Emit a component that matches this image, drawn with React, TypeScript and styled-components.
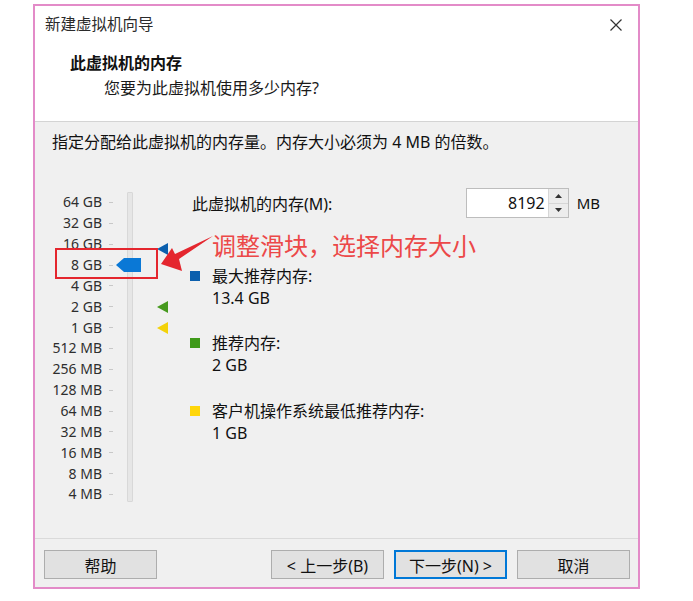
import React from 'react';
import styled, {createGlobalStyle} from 'styled-components';

const GlobalStyle = createGlobalStyle`
  body {
    margin: 0;
    background: #fff;
    font-family: "Noto Sans", "Noto Sans CJK SC", sans-serif;
    color: #111;
  }
`;

const ROW = 20.86;
const SCALE_TOP = 4;

const scaleLabels = [
  '64 GB', '32 GB', '16 GB', '8 GB', '4 GB', '2 GB', '1 GB',
  '512 MB', '256 MB', '128 MB', '64 MB', '32 MB', '16 MB', '8 MB', '4 MB',
];

// row centre for a value in MB (log2 scale, 64 GB on top)
const rowCenter = (mb: number) =>
  SCALE_TOP + ROW / 2 + Math.log2(65536 / mb) * ROW;

const markers = [
  {mb: 13.4 * 1024, color: '#0b5fad'},
  {mb: 2048, color: '#479a1f'},
  {mb: 1024, color: '#f3d20a'},
];

const legend = [
  {label: '最大推荐内存:', value: '13.4 GB', color: '#0b5fad'},
  {label: '推荐内存:', value: '2 GB', color: '#3f9a1a'},
  {label: '客户机操作系统最低推荐内存:', value: '1 GB', color: '#ffd60a'},
];

const Page = styled.div`
  padding: 4px 0 0 33px;
`;

const Dialog = styled.div`
  width: 607px;
  height: 585px;
  box-sizing: border-box;
  border: 2px solid #e38bc8;
  display: flex;
  flex-direction: column;
  background: #f0f0f0;
`;

const Header = styled.header`
  flex-shrink: 0;
  height: 115px;
  background: #fff;
  border-bottom: 1px solid #d4d4d4;
`;

const TitleBar = styled.div`
  display: flex;
  align-items: center;
  justify-content: space-between;
  height: 20px;
  padding: 8px 16px 0 10px;
`;

const WindowTitle = styled.span`
  font-size: 15.5px;
  color: #2b2b2b;
  line-height: 20px;
`;

const CloseButton = styled.span`
  display: flex;
  width: 12px;
  height: 12px;
  margin-top: 2px;
`;

const Heading = styled.div`
  margin-top: 18px;
  padding-left: 35px;
  font-size: 16px;
  font-weight: bold;
  line-height: 22px;
  color: #111;
`;

const SubHeading = styled.div`
  margin-top: 3px;
  padding-left: 69px;
  font-size: 16px;
  line-height: 22px;
  color: #1a1a1a;
`;

const Body = styled.main`
  position: relative;
  flex: 1;
  padding: 9px 0 0 17px;
  font-size: 16px;
`;

const Instruction = styled.div`
  line-height: 22px;
`;

const Content = styled.div`
  display: flex;
  margin-top: 35px;
`;

const Scale = styled.div`
  position: relative;
  display: flex;
  width: 138px;
  padding-top: ${SCALE_TOP}px;
  box-sizing: border-box;
`;

const Labels = styled.div`
  display: grid;
  grid-template-columns: 50px 4px;
  column-gap: 7px;
  grid-auto-rows: ${ROW}px;
  align-items: center;
`;

const ScaleLabel = styled.span`
  font-size: 14px;
  line-height: 1;
  text-align: right;
  color: #2e2e2e;
`;

const Tick = styled.span`
  height: 1px;
  background: #c8c8c8;
`;

const Track = styled.div`
  width: 6px;
  height: 310px;
  margin-left: 14px;
  box-sizing: border-box;
  background: #e6e6e6;
  border: 1px solid #d8d8d8;
  border-radius: 1px;
`;

const Thumb = styled.svg<{$top: number}>`
  position: absolute;
  left: 64px;
  top: ${({$top}) => $top - 7}px;
`;

const Marker = styled.svg<{$top: number}>`
  position: absolute;
  left: 105px;
  top: ${({$top}) => $top - 6}px;
`;

const Settings = styled.div`
  display: flex;
  flex-direction: column;
  width: 410px;
`;

const MemoryRow = styled.div`
  display: flex;
  align-items: center;
  height: 30px;
`;

const MemoryLabel = styled.span`
  flex: 1;
  padding-left: 2px;
`;

const SpinBox = styled.div`
  display: flex;
  width: 103px;
  height: 30px;
  box-sizing: border-box;
  border: 1px solid #bdbdbd;
  background: #fff;
`;

const SpinValue = styled.span`
  flex: 1;
  padding-right: 3px;
  text-align: right;
  line-height: 28px;
  color: #111;
`;

const SpinButtons = styled.div`
  display: flex;
  flex-direction: column;
  width: 19px;
  background: #ececec;
  border-left: 1px solid #d6d6d6;
`;

const SpinArrow = styled.span<{$down?: boolean}>`
  display: flex;
  flex: 1;
  align-items: center;
  justify-content: center;
  border-top: ${({$down}) => ($down ? '1px solid #d6d6d6' : 'none')};
`;

const Unit = styled.span`
  margin-left: 8px;
  font-size: 15px;
`;

const Legend = styled.div`
  display: flex;
  flex-direction: column;
  gap: 23.5px;
  margin-top: 46.5px;
`;

const LegendItem = styled.div`
  display: grid;
  grid-template-columns: 22px auto;
  line-height: 22px;
`;

const Swatch = styled.span<{$color: string}>`
  width: 10px;
  height: 10px;
  margin-top: 6px;
  background: ${({$color}) => $color};
`;

const LegendValue = styled.span`
  grid-column: 2;
`;

const Footer = styled.footer`
  flex-shrink: 0;
  display: flex;
  gap: 10px;
  height: 49px;
  box-sizing: border-box;
  padding: 11px 8px 0 9px;
  border-top: 1px solid #dadada;
`;

const Button = styled.button<{$primary?: boolean; $pushRight?: boolean}>`
  width: 113px;
  height: 29px;
  margin-left: ${({$pushRight}) => ($pushRight ? 'auto' : '0')};
  padding: 0;
  background: #e1e1e1;
  border: 1px solid ${({$primary}) => ($primary ? '#0078d7' : '#adadad')};
  box-shadow: ${({$primary}) => ($primary ? 'inset 0 0 0 1px #0078d7' : 'none')};
  font-family: inherit;
  font-size: 16px;
  color: #111;
`;

const RedBox = styled.div`
  position: absolute;
  left: 20px;
  top: 126px;
  width: 103px;
  height: 31px;
  box-sizing: border-box;
  border: 2px solid #e4262e;
`;

const Arrow = styled.svg`
  position: absolute;
  left: 123px;
  top: 110px;
`;

const Callout = styled.div`
  position: absolute;
  left: 177px;
  top: 109px;
  font-size: 24px;
  line-height: 30px;
  color: #ec4848;
  white-space: nowrap;
`;

export default function App() {
  return (
    <Page>
      <GlobalStyle />
      <Dialog>
        <Header>
          <TitleBar>
            <WindowTitle>新建虚拟机向导</WindowTitle>
            <CloseButton>
              <svg width="12" height="12" viewBox="0 0 12 12">
                <path d="M0.5 0.5 L11.5 11.5 M11.5 0.5 L0.5 11.5" stroke="#333" strokeWidth="1.2" />
              </svg>
            </CloseButton>
          </TitleBar>
          <Heading>此虚拟机的内存</Heading>
          <SubHeading>您要为此虚拟机使用多少内存?</SubHeading>
        </Header>

        <Body>
          <Instruction>指定分配给此虚拟机的内存量。内存大小必须为 4 MB 的倍数。</Instruction>
          <Content>
            <Scale>
              <Labels>
                {scaleLabels.map((l) => (
                  <React.Fragment key={l}>
                    <ScaleLabel>{l}</ScaleLabel>
                    <Tick />
                  </React.Fragment>
                ))}
              </Labels>
              <Track />
              {markers.map((m) => (
                <Marker key={m.mb} $top={rowCenter(m.mb)} width="11" height="12" viewBox="0 0 11 12">
                  <path d="M0 6 L11 0 L11 12 Z" fill={m.color} />
                </Marker>
              ))}
              <Thumb $top={rowCenter(8192)} width="25" height="14" viewBox="0 0 25 14">
                <path d="M0 7 L8 0 H25 V14 H8 Z" fill="#0a78d6" />
              </Thumb>
            </Scale>

            <Settings>
              <MemoryRow>
                <MemoryLabel>此虚拟机的内存(M):</MemoryLabel>
                <SpinBox>
                  <SpinValue>8192</SpinValue>
                  <SpinButtons>
                    <SpinArrow>
                      <svg width="7" height="4" viewBox="0 0 7 4">
                        <path d="M0 4 L3.5 0 L7 4 Z" fill="#333" />
                      </svg>
                    </SpinArrow>
                    <SpinArrow $down>
                      <svg width="7" height="4" viewBox="0 0 7 4">
                        <path d="M0 0 L3.5 4 L7 0 Z" fill="#333" />
                      </svg>
                    </SpinArrow>
                  </SpinButtons>
                </SpinBox>
                <Unit>MB</Unit>
              </MemoryRow>

              <Legend>
                {legend.map((item) => (
                  <LegendItem key={item.label}>
                    <Swatch $color={item.color} />
                    <span>{item.label}</span>
                    <LegendValue>{item.value}</LegendValue>
                  </LegendItem>
                ))}
              </Legend>
            </Settings>
          </Content>

          <RedBox />
          <Arrow width="58" height="40" viewBox="0 0 58 40">
            <path d="M3 32 L14 16 L17 22 L55 4 L21 27 L24 39 Z" fill="#e4262e" />
          </Arrow>
          <Callout>调整滑块，选择内存大小</Callout>
        </Body>

        <Footer>
          <Button>帮助</Button>
          <Button $pushRight>&lt; 上一步(B)</Button>
          <Button $primary>下一步(N) &gt;</Button>
          <Button>取消</Button>
        </Footer>
      </Dialog>
    </Page>
  );
}
